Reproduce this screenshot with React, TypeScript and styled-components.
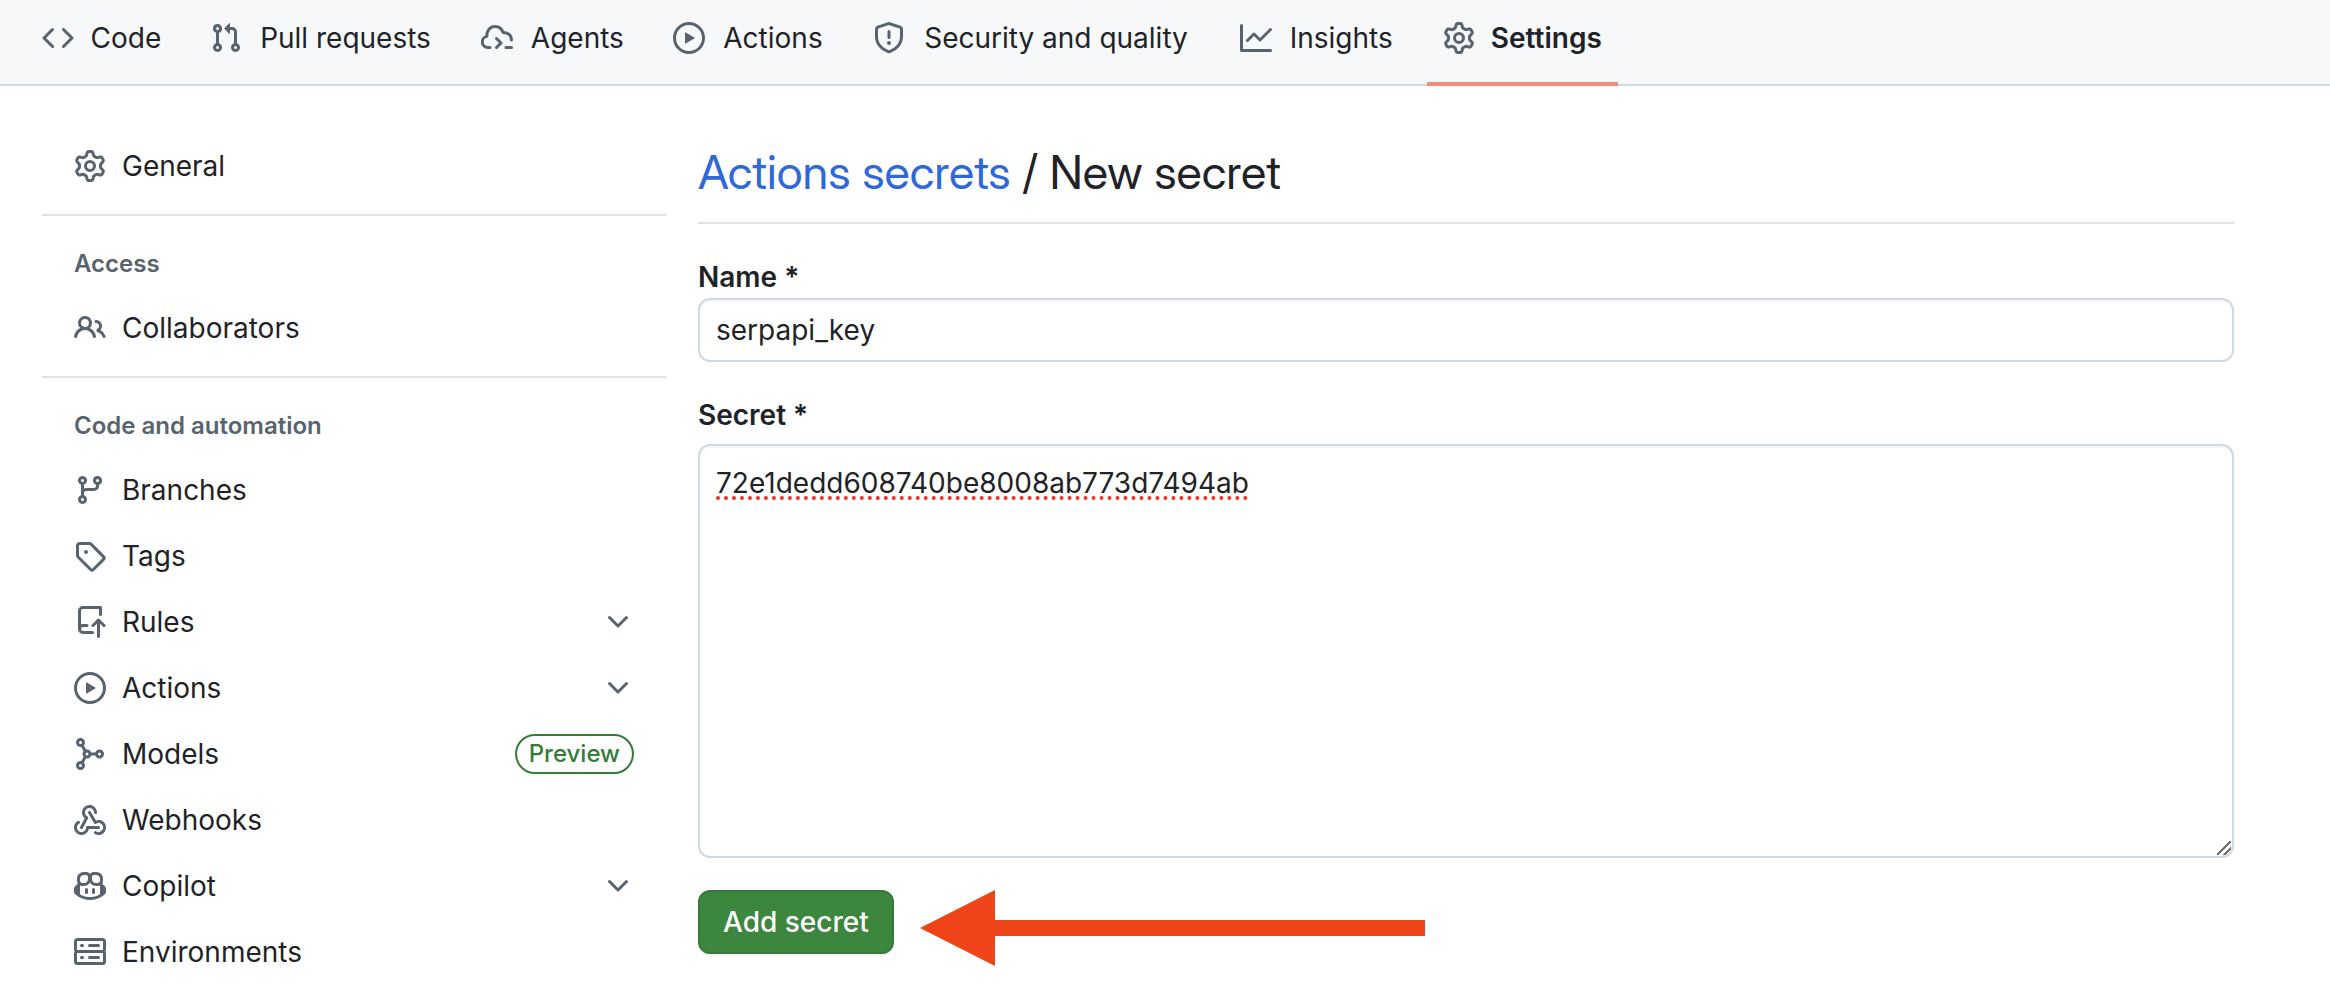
import React from "react";
import styled, { createGlobalStyle } from "styled-components";

const GlobalStyle = createGlobalStyle`
  * { box-sizing: border-box; }
  html, body { margin: 0; padding: 0; background: #ffffff; }
  body {
    font-family: Inter, "Liberation Sans", sans-serif;
    font-size: 28px;
    line-height: 42px;
    color: #1f2328;
    overflow: hidden;
  }
  button, input, textarea { font: inherit; color: inherit; }
`;

const Icon = styled.svg.attrs({ viewBox: "0 0 16 16", "aria-hidden": true })`
  width: 32px;
  height: 32px;
  flex: none;
  display: block;
  fill: #59636e;
`;

const Strokes = styled.g`
  fill: none;
  stroke: #59636e;
  stroke-width: 1.5;
  stroke-linecap: round;
  stroke-linejoin: round;
`;

const paths = {
  code: "m11.28 3.22 4.25 4.25a.75.75 0 0 1 0 1.06l-4.25 4.25a.749.749 0 0 1-1.275-.326.749.749 0 0 1 .215-.734L13.94 8l-3.72-3.72a.749.749 0 0 1 .326-1.275.749.749 0 0 1 .734.215Zm-6.56 0a.751.751 0 0 1 1.042.018.751.751 0 0 1 .018 1.042L2.06 8l3.72 3.72a.749.749 0 0 1-.326 1.275.749.749 0 0 1-.734-.215L.47 8.53a.75.75 0 0 1 0-1.06Z",
  pull: "M1.5 3.25a2.25 2.25 0 1 1 3 2.122v5.256a2.251 2.251 0 1 1-1.5 0V5.372A2.25 2.25 0 0 1 1.5 3.25Zm5.677-.177L9.573.677A.25.25 0 0 1 10 .854V2.5h1A2.5 2.5 0 0 1 13.5 5v5.628a2.251 2.251 0 1 1-1.5 0V5a1 1 0 0 0-1-1h-1v1.646a.25.25 0 0 1-.427.177L7.177 3.427a.25.25 0 0 1 0-.354ZM3.75 2.5a.75.75 0 1 0 0 1.5.75.75 0 0 0 0-1.5Zm0 9.5a.75.75 0 1 0 0 1.5.75.75 0 0 0 0-1.5Zm8.25.75a.75.75 0 1 0 1.5 0 .75.75 0 0 0-1.5 0Z",
  play: "M8 0a8 8 0 1 1 0 16A8 8 0 0 1 8 0ZM1.5 8a6.5 6.5 0 1 0 13 0 6.5 6.5 0 0 0-13 0Zm4.879-2.773 4.264 2.559a.25.25 0 0 1 0 .428l-4.264 2.559A.25.25 0 0 1 6 10.559V5.442a.25.25 0 0 1 .379-.215Z",
  shield: "M7.467.133a1.748 1.748 0 0 1 1.066 0l5.25 1.68A1.75 1.75 0 0 1 15 3.48V7c0 1.566-.32 3.182-1.303 4.682-.983 1.498-2.585 2.813-5.032 3.855a1.697 1.697 0 0 1-1.33 0c-2.447-1.042-4.049-2.357-5.032-3.855C1.32 10.182 1 8.566 1 7V3.48a1.75 1.75 0 0 1 1.217-1.667Zm.61 1.429a.25.25 0 0 0-.153 0l-5.25 1.68a.25.25 0 0 0-.174.238V7c0 1.358.275 2.666 1.057 3.86.784 1.194 2.121 2.34 4.366 3.297a.196.196 0 0 0 .154 0c2.245-.956 3.582-2.104 4.366-3.298C13.225 9.666 13.5 8.36 13.5 7V3.48a.251.251 0 0 0-.174-.237l-5.25-1.68ZM8.75 4.75v3a.75.75 0 0 1-1.5 0v-3a.75.75 0 0 1 1.5 0ZM9 10.5a1 1 0 1 1-2 0 1 1 0 0 1 2 0Z",
  graph: "M1.5 1.75V13.5h13.75a.75.75 0 0 1 0 1.5H.75a.75.75 0 0 1-.75-.75V1.75a.75.75 0 0 1 1.5 0Zm14.28 2.53-5.25 5.25a.75.75 0 0 1-1.06 0L7 7.06 4.28 9.78a.751.751 0 0 1-1.042-.018.751.751 0 0 1-.018-1.042l3.25-3.25a.75.75 0 0 1 1.06 0L10 7.94l4.72-4.72a.751.751 0 0 1 1.042.018.751.751 0 0 1 .018 1.042Z",
  gear: "M8 0a8.2 8.2 0 0 1 .701.031C9.444.095 9.99.645 10.16 1.29l.288 1.107c.018.066.079.158.212.224.231.114.454.243.668.386.123.082.233.09.299.071l1.103-.303c.644-.176 1.392.021 1.82.63.27.385.506.792.704 1.218.315.675.111 1.422-.364 1.891l-.814.806c-.049.048-.098.147-.088.294.016.257.016.515 0 .772-.01.147.038.246.088.294l.814.806c.475.469.679 1.216.364 1.891a7.977 7.977 0 0 1-.704 1.217c-.428.61-1.176.807-1.82.63l-1.102-.302c-.067-.019-.177-.011-.3.071a5.909 5.909 0 0 1-.668.386c-.133.066-.194.158-.211.224l-.29 1.106c-.168.646-.715 1.196-1.458 1.26a8.006 8.006 0 0 1-1.402 0c-.743-.064-1.289-.614-1.458-1.26l-.289-1.106c-.018-.066-.079-.158-.212-.224a5.738 5.738 0 0 1-.668-.386c-.123-.082-.233-.09-.299-.071l-1.103.303c-.644.176-1.392-.021-1.82-.63a8.12 8.12 0 0 1-.704-1.218c-.315-.675-.111-1.422.363-1.891l.815-.806c.05-.048.098-.147.088-.294a6.214 6.214 0 0 1 0-.772c.01-.147-.038-.246-.088-.294l-.815-.806C.635 6.045.431 5.298.746 4.623a7.92 7.92 0 0 1 .704-1.217c.428-.61 1.176-.807 1.82-.63l1.102.302c.067.019.177.011.3-.071.214-.143.437-.272.668-.386.133-.066.194-.158.211-.224l.29-1.106C6.009.645 6.556.095 7.299.03 7.53.01 7.764 0 8 0Zm-.571 1.525c-.036.003-.108.036-.137.146l-.289 1.105c-.147.561-.549.967-.998 1.189-.173.086-.34.183-.5.29-.417.278-.97.423-1.529.27l-1.103-.303c-.109-.03-.175.016-.195.045-.22.312-.412.644-.573.99-.014.031-.021.11.059.19l.815.806c.411.406.562.957.53 1.456a4.709 4.709 0 0 0 0 .582c.032.499-.119 1.05-.53 1.456l-.815.806c-.081.08-.073.159-.059.19.162.346.353.677.573.989.02.03.085.076.195.046l1.102-.303c.56-.153 1.113-.008 1.53.27.161.107.328.204.501.29.447.222.85.629.997 1.189l.289 1.105c.029.109.101.143.137.146a6.6 6.6 0 0 0 1.142 0c.036-.003.108-.036.137-.146l.289-1.105c.147-.561.549-.967.998-1.189.173-.086.34-.183.5-.29.417-.278.97-.423 1.529-.27l1.103.303c.109.029.175-.016.195-.045.22-.313.411-.644.573-.99.014-.031.021-.11-.059-.19l-.815-.806c-.411-.406-.562-.957-.53-1.456a4.709 4.709 0 0 0 0-.582c-.032-.499.119-1.05.53-1.456l.815-.806c.081-.08.073-.159.059-.19a6.464 6.464 0 0 0-.573-.989c-.02-.03-.085-.076-.195-.046l-1.102.303c-.56.153-1.113.008-1.53-.27a4.44 4.44 0 0 0-.501-.29c-.447-.222-.85-.629-.997-1.189l-.289-1.105c-.029-.11-.101-.143-.137-.146a6.6 6.6 0 0 0-1.142 0ZM11 8a3 3 0 1 1-6 0 3 3 0 0 1 6 0ZM9.5 8a1.5 1.5 0 1 0-3.001.001A1.5 1.5 0 0 0 9.5 8Z",
  people: "M2 5.5a3.5 3.5 0 1 1 5.898 2.549 5.508 5.508 0 0 1 3.034 4.084.75.75 0 1 1-1.482.235 4 4 0 0 0-7.9 0 .75.75 0 0 1-1.482-.236A5.507 5.507 0 0 1 3.102 8.05 3.493 3.493 0 0 1 2 5.5ZM11 4a3.001 3.001 0 0 1 2.22 5.018 5.01 5.01 0 0 1 2.56 3.012.749.749 0 0 1-.885.954.752.752 0 0 1-.549-.514 3.507 3.507 0 0 0-2.522-2.372.75.75 0 0 1-.574-.73v-.352a.75.75 0 0 1 .416-.672A1.5 1.5 0 0 0 11 5.5.75.75 0 0 1 11 4Zm-5.5-.5a2 2 0 1 0-.001 3.999A2 2 0 0 0 5.5 3.5Z",
  branch: "M9.5 3.25a2.25 2.25 0 1 1 3 2.122V6A2.5 2.5 0 0 1 10 8.5H6a1 1 0 0 0-1 1v1.128a2.251 2.251 0 1 1-1.5 0V5.372a2.25 2.25 0 1 1 1.5 0v1.836A2.493 2.493 0 0 1 6 7h4a1 1 0 0 0 1-1v-.628A2.25 2.25 0 0 1 9.5 3.25Zm-6 0a.75.75 0 1 0 1.5 0 .75.75 0 0 0-1.5 0Zm8.25-.75a.75.75 0 1 0 0 1.5.75.75 0 0 0 0-1.5ZM4.25 12a.75.75 0 1 0 0 1.5.75.75 0 0 0 0-1.5Z",
  tag: "M1 7.775V2.75C1 1.784 1.784 1 2.75 1h5.025c.464 0 .91.184 1.238.513l6.25 6.25a1.75 1.75 0 0 1 0 2.474l-5.026 5.026a1.75 1.75 0 0 1-2.474 0l-6.25-6.25A1.752 1.752 0 0 1 1 7.775Zm1.5 0c0 .066.026.13.073.177l6.25 6.25a.25.25 0 0 0 .354 0l5.025-5.025a.25.25 0 0 0 0-.354l-6.25-6.25a.25.25 0 0 0-.177-.073H2.75a.25.25 0 0 0-.25.25ZM6 5a1 1 0 1 1 0 2 1 1 0 0 1 0-2Z",
  webhook: "M5.5 4.25a2.25 2.25 0 0 1 4.5 0 .75.75 0 0 0 1.5 0 3.75 3.75 0 1 0-6.14 2.889l-2.272 4.258a.75.75 0 0 0 1.324.706L7 7.25a.75.75 0 0 0-.309-1.015A2.25 2.25 0 0 1 5.5 4.25ZM7.364 3.607a.75.75 0 0 1 1.03.257l2.608 4.349a3.75 3.75 0 1 1-.628 6.785.75.75 0 0 1 .752-1.299 2.25 2.25 0 1 0-.033-3.88.75.75 0 0 1-1.03-.256L7.107 4.636a.75.75 0 0 1 .257-1.03ZM2.9 8.776A.75.75 0 0 1 2.625 9.8 2.25 2.25 0 1 0 6 11.75a.75.75 0 0 1 .75-.751h5.5a.75.75 0 0 1 0 1.5H7.425a3.751 3.751 0 1 1-5.55-3.998.75.75 0 0 1 1.024.274Z",
  copilot: "M7.998 15.035c-4.562 0-7.873-2.914-7.998-3.749V9.338c.085-.628.677-1.686 1.588-2.065.013-.07.024-.143.036-.218.029-.183.06-.384.126-.612-.201-.508-.254-1.084-.254-1.656 0-.87.128-1.769.693-2.484.579-.733 1.494-1.124 2.724-1.261 1.206-.134 2.262.034 2.944.765.05.053.096.108.139.165.044-.057.094-.112.143-.165.682-.731 1.738-.899 2.944-.765 1.23.137 2.145.528 2.724 1.261.566.715.693 1.614.693 2.484 0 .572-.053 1.148-.254 1.656.066.228.098.429.126.612.012.076.024.148.037.218.924.385 1.522 1.471 1.591 2.095v1.872c0 .766-3.351 3.795-8.002 3.795Zm0-1.485c2.28 0 4.584-1.11 5.002-1.433V7.862l-.023-.116c-.49.21-1.075.291-1.727.291-1.146 0-2.059-.327-2.71-.991A3.222 3.222 0 0 1 8 6.303a3.24 3.24 0 0 1-.544.743c-.65.664-1.563.991-2.71.991-.652 0-1.236-.081-1.727-.291l-.023.116v4.255c.419.323 2.722 1.433 5.002 1.433ZM6.762 2.83c-.193-.206-.637-.413-1.682-.297-1.019.113-1.479.404-1.713.7-.247.312-.369.789-.369 1.554 0 .793.129 1.171.308 1.371.162.181.519.379 1.442.379.853 0 1.339-.235 1.638-.54.315-.322.527-.827.617-1.553.117-.935-.037-1.395-.241-1.614Zm4.155-.297c-1.044-.116-1.488.091-1.681.297-.204.219-.359.679-.242 1.614.091.726.303 1.231.618 1.553.299.305.784.54 1.638.54.922 0 1.28-.198 1.442-.379.179-.2.308-.578.308-1.371 0-.765-.123-1.242-.37-1.554-.233-.296-.693-.587-1.713-.7ZM6.25 9.037a.75.75 0 0 1 .75.75v1.501a.75.75 0 0 1-1.5 0V9.787a.75.75 0 0 1 .75-.75Zm4.25.75v1.501a.75.75 0 0 1-1.5 0V9.787a.75.75 0 0 1 1.5 0Z",
  server: "M1.75 1h12.5c.966 0 1.75.784 1.75 1.75v4c0 .372-.116.717-.314 1 .198.283.314.628.314 1v4a1.75 1.75 0 0 1-1.75 1.75H1.75A1.75 1.75 0 0 1 0 12.75v-4c0-.358.109-.707.314-1a1.739 1.739 0 0 1-.314-1v-4C0 1.784.784 1 1.75 1ZM1.5 2.75v4c0 .138.112.25.25.25h12.5a.25.25 0 0 0 .25-.25v-4a.25.25 0 0 0-.25-.25H1.75a.25.25 0 0 0-.25.25Zm.25 5.75a.25.25 0 0 0-.25.25v4c0 .138.112.25.25.25h12.5a.25.25 0 0 0 .25-.25v-4a.25.25 0 0 0-.25-.25ZM7 4.75A.75.75 0 0 1 7.75 4h4.5a.75.75 0 0 1 0 1.5h-4.5A.75.75 0 0 1 7 4.75ZM7.75 10h4.5a.75.75 0 0 1 0 1.5h-4.5a.75.75 0 0 1 0-1.5ZM3 4.75A.75.75 0 0 1 3.75 4h.5a.75.75 0 0 1 0 1.5h-.5A.75.75 0 0 1 3 4.75ZM3.75 10h.5a.75.75 0 0 1 0 1.5h-.5a.75.75 0 0 1 0-1.5Z",
  chevron: "M12.78 5.22a.749.749 0 0 1 0 1.06l-4.25 4.25a.749.749 0 0 1-1.06 0L3.22 6.28a.749.749 0 1 1 1.06-1.06L8 8.939l3.72-3.719a.749.749 0 0 1 1.06 0Z",
};

type IconName = keyof typeof paths | "agents" | "rules" | "models";

function Glyph({ name }: { name: IconName }) {
  if (name === "agents") {
    return (
      <Icon>
        <Strokes>
          <path d="M4.5 12.75H3.4A2.8 2.8 0 0 1 2.9 7.2C2.8 4.3 4.6 2.25 7 2.25c2 0 3.4 1.1 4 2.95 2.4 0 4.2 1.4 4.2 3.8" />
          <path d="m7.75 8.25 2.25 2.25-2.25 2.25M12.5 12.75h2.75" />
        </Strokes>
      </Icon>
    );
  }
  if (name === "rules") {
    return (
      <Icon>
        <Strokes>
          <path d="M13.25 4.25V.75H4.5A1.75 1.75 0 0 0 2.75 2.5v9a1.75 1.75 0 0 0 1.75 1.75h4.75M2.75 11.5A1.75 1.75 0 0 1 4.5 9.75h2" />
          <path d="M12.25 15.25v-8M9.5 9.75l2.75-2.75L15 9.75" />
        </Strokes>
      </Icon>
    );
  }
  if (name === "models") {
    return (
      <Icon>
        <Strokes>
          <circle cx="3.25" cy="2.25" r="1.5" />
          <circle cx="3.25" cy="13.75" r="1.5" />
          <circle cx="6.5" cy="8" r="1.5" />
          <circle cx="12.75" cy="8" r="1.5" />
          <path d="M4 3.6 5.7 6.6M4 12.4l1.7-3M8 8h3.2" />
        </Strokes>
      </Icon>
    );
  }
  return (
    <Icon>
      <path d={paths[name]} />
    </Icon>
  );
}

const RepoNav = styled.nav`
  display: flex;
  gap: 16px;
  height: 86px;
  padding: 0 26px;
  background: #f6f8fa;
  box-shadow: inset 0 -2px 0 #d1d9e3;
`;

const NavTab = styled.a<{ $current?: boolean }>`
  display: flex;
  align-items: center;
  gap: 16px;
  padding: 0 16px 10px;
  color: inherit;
  text-decoration: none;
  white-space: nowrap;
  font-weight: ${(p) => (p.$current ? 600 : 400)};
  box-shadow: ${(p) => (p.$current ? "inset 0 -4px 0 #f28e75" : "none")};
`;

/* Reserves the bold width so that tabs keep their size when selected. */
const TabLabel = styled.span`
  display: flex;
  flex-direction: column;
  align-items: center;

  &::after {
    content: attr(data-label);
    height: 0;
    overflow: hidden;
    visibility: hidden;
    font-weight: 600;
  }
`;

const Page = styled.div`
  display: grid;
  grid-template-columns: 624px minmax(0, 1fr);
  column-gap: 32px;
  padding: 48px 96px 0 42px;
`;

const Sidebar = styled.nav`
  min-width: 0;
`;

const Group = styled.section`
  & + & {
    margin-top: 16px;
    padding-top: 16px;
    border-top: 2px solid #dfe3e9;
  }
`;

const GroupTitle = styled.h2`
  margin: 0;
  padding: 14px 32px;
  font-size: 24px;
  line-height: 36px;
  font-weight: 600;
  color: #59636e;
`;

const List = styled.ul`
  margin: 0;
  padding: 0;
  list-style: none;
  display: grid;
  row-gap: 2px;
`;

const SideLink = styled.a`
  display: flex;
  align-items: center;
  gap: 16px;
  height: 64px;
  padding: 0 32px;
  color: inherit;
  text-decoration: none;
`;

const SideButton = styled(SideLink).attrs({ as: "button", type: "button" })`
  width: 100%;
  border: 0;
  background: none;
  text-align: left;
`;

const SideLabel = styled.span`
  flex: 1;
`;

const PreviewBadge = styled.span`
  padding: 0 12px;
  border: 2px solid #347d39;
  border-radius: 20px;
  font-size: 24px;
  line-height: 36px;
  font-weight: 500;
  color: #347d39;
`;

const Main = styled.main`
  min-width: 0;
`;

const Title = styled.h1`
  margin: 0 0 32px;
  padding: 4px 0 16px;
  border-bottom: 2px solid #dfe3e9;
  font-family: "Inter Display", Inter, "Liberation Sans", sans-serif;
  font-size: 47px;
  line-height: 68px;
  font-weight: 400;
`;

const TitleLink = styled.a`
  color: #2f68d8;
  text-decoration: none;
`;

const Field = styled.div<{ $gap: number }>`
  display: flex;
  flex-direction: column;
  gap: ${(p) => p.$gap}px;
  margin-bottom: 32px;
`;

const Label = styled.label`
  font-weight: 600;
`;

const TextInput = styled.input`
  width: 100%;
  height: 64px;
  padding: 0 16px;
  border: 2px solid #d1d9e3;
  border-radius: 12px;
  background: #ffffff;
  box-shadow: inset 0 2px 0 #1f23280a;
  outline: none;
`;

const SecretInput = styled.textarea`
  display: block;
  width: 100%;
  height: 414px;
  padding: 16px;
  border: 2px solid #d1d9e3;
  border-radius: 12px;
  background: #ffffff;
  box-shadow: inset 0 2px 0 #1f23280a;
  outline: none;
  resize: vertical;
  text-decoration: underline dotted #f0321e 4px;
  text-underline-offset: 3px;

  &::-webkit-resizer {
    background: linear-gradient(
        135deg,
        transparent 46%,
        #6e6e6e 46% 54%,
        transparent 54% 71%,
        #6e6e6e 71% 79%,
        transparent 79%
      )
      0 0 / 14px 14px no-repeat;
  }
`;

const Actions = styled.div`
  display: flex;
  align-items: flex-start;
  gap: 26px;
`;

const SubmitButton = styled.button`
  height: 64px;
  padding: 0 23px;
  border: 2px solid #387a3c;
  border-radius: 12px;
  background: #3d863e;
  box-shadow: 0 2px 2px #1f23280f;
  color: #ffffff;
  font-weight: 500;
  white-space: nowrap;
`;

const Arrow = styled.svg.attrs({ viewBox: "0 0 505 76", "aria-hidden": true })`
  width: 505px;
  height: 76px;
  fill: #ef431a;
`;

const tabs: { icon: IconName; label: string; current?: boolean }[] = [
  { icon: "code", label: "Code" },
  { icon: "pull", label: "Pull requests" },
  { icon: "agents", label: "Agents" },
  { icon: "play", label: "Actions" },
  { icon: "shield", label: "Security and quality" },
  { icon: "graph", label: "Insights" },
  { icon: "gear", label: "Settings", current: true },
];

type Entry = { icon: IconName; label: string; expandable?: boolean; badge?: string };

const groups: { title?: string; entries: Entry[] }[] = [
  { entries: [{ icon: "gear", label: "General" }] },
  { title: "Access", entries: [{ icon: "people", label: "Collaborators" }] },
  {
    title: "Code and automation",
    entries: [
      { icon: "branch", label: "Branches" },
      { icon: "tag", label: "Tags" },
      { icon: "rules", label: "Rules", expandable: true },
      { icon: "play", label: "Actions", expandable: true },
      { icon: "models", label: "Models", badge: "Preview" },
      { icon: "webhook", label: "Webhooks" },
      { icon: "copilot", label: "Copilot", expandable: true },
      { icon: "server", label: "Environments" },
    ],
  },
];

function SideEntry({ icon, label, expandable, badge }: Entry) {
  const content = (
    <>
      <Glyph name={icon} />
      <SideLabel>{label}</SideLabel>
      {badge && <PreviewBadge>{badge}</PreviewBadge>}
      {expandable && <Glyph name="chevron" />}
    </>
  );
  return (
    <li>
      {expandable ? (
        <SideButton aria-expanded={false}>{content}</SideButton>
      ) : (
        <SideLink href="#">{content}</SideLink>
      )}
    </li>
  );
}

export default function App() {
  return (
    <>
      <GlobalStyle />
      <RepoNav aria-label="Repository">
        {tabs.map((t) => (
          <NavTab key={t.label} href="#" $current={t.current} aria-current={t.current ? "page" : undefined}>
            <Glyph name={t.icon} />
            <TabLabel data-label={t.label}>{t.label}</TabLabel>
          </NavTab>
        ))}
      </RepoNav>
      <Page>
        <Sidebar aria-label="Settings">
          {groups.map((g, i) => (
            <Group key={i}>
              {g.title && <GroupTitle>{g.title}</GroupTitle>}
              <List>
                {g.entries.map((e) => (
                  <SideEntry key={e.label} {...e} />
                ))}
              </List>
            </Group>
          ))}
        </Sidebar>
        <Main>
          <Title>
            <TitleLink href="#">Actions secrets</TitleLink> / New secret
          </Title>
          <form onSubmit={(e) => e.preventDefault()}>
            <Field $gap={0}>
              <Label htmlFor="secret-name">Name *</Label>
              <TextInput id="secret-name" defaultValue="serpapi_key" spellCheck={false} />
            </Field>
            <Field $gap={8}>
              <Label htmlFor="secret-value">Secret *</Label>
              <SecretInput id="secret-value" defaultValue="72e1dedd608740be8008ab773d7494ab" spellCheck={false} />
            </Field>
            <Actions>
              <SubmitButton type="submit">Add secret</SubmitButton>
              <Arrow>
                <path d="M0 38 75 0v30h430v16H75v30Z" />
              </Arrow>
            </Actions>
          </form>
        </Main>
      </Page>
    </>
  );
}
